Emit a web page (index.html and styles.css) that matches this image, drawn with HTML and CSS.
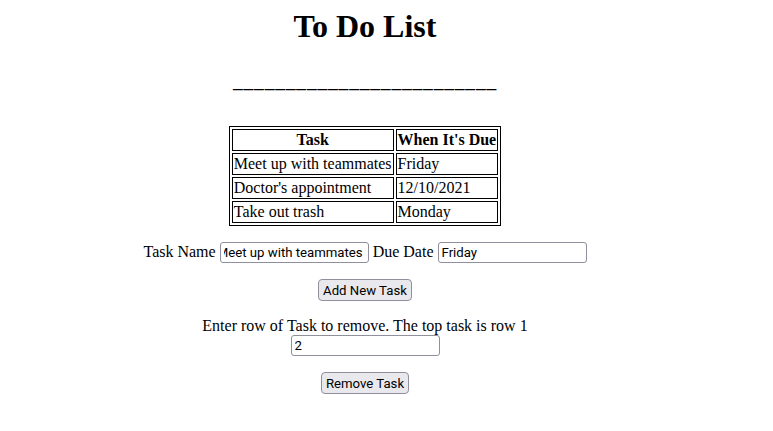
FILE: index.html
```html
<!DOCTYPE html>
<html>
<head>
<meta charset="utf-8">
<link rel="stylesheet" href="styles.css">
</head>
<body>
<div class="page">
<h1 class="title">To Do List</h1>
<h2 class="rule">_________________________</h2>
<table class="tasks">
<tr><th>Task</th><th>When It's Due</th></tr>
<tr><td>Meet up with teammates</td><td>Friday</td></tr>
<tr><td>Doctor's appointment</td><td>12/10/2021</td></tr>
<tr><td>Take out trash</td><td>Monday</td></tr>
</table>
<p class="row">Task Name <input class="field scrolled" type="text" value="Meet up with teammates"> Due Date <input class="field" type="text" value="Friday"></p>
<p class="row"><button class="btn" type="button">Add New Task</button></p>
<p class="row">Enter row of Task to remove. The top task is row 1<br><input class="field" type="text" value="2"></p>
<p class="row"><button class="btn" type="button">Remove Task</button></p>
</div>
</body>
</html>
```
FILE: styles.css
```css
html, body {
  margin: 0;
  padding: 0;
  background: #fff;
}
body {
  margin: 8px;
  font-family: "Liberation Serif", "Times New Roman", serif;
  font-size: 16px;
  color: #000;
}
.page {
  width: 714px;
  text-align: center;
}
.title {
  font-size: 32px;
  font-weight: bold;
  margin: 0 0 21px;
}
.rule {
  font-size: 19.5px;
  letter-spacing: 0.81px;
  font-weight: bold;
  padding-top: 5px;
  margin: 0 0 33px;
}
.tasks {
  margin: 0 auto;
  border: 1px solid #000;
  border-spacing: 2px;
}
.tasks th, .tasks td {
  border: 1px solid #000;
  padding: 1px;
}
.tasks td {
  text-align: left;
}
.row {
  margin: 16px 0;
}
.field {
  font-family: Roboto, "Liberation Sans", Arial, sans-serif;
  font-size: 13.2px;
  width: 149px;
  height: 21px;
  box-sizing: border-box;
  padding: 1px 3px;
  border: 1px solid #8f8f9d;
  border-radius: 3px;
  color: #000;
  background: #fff;
  vertical-align: baseline;
}
.scrolled {
  direction: rtl;
  padding-right: 5px;
}
.btn {
  font-family: Roboto, "Liberation Sans", Arial, sans-serif;
  font-size: 13.2px;
  padding: 1px 4px;
  height: 22px;
  border: 1px solid #8f8f9d;
  border-radius: 4px;
  background: #e9e9ed;
  color: #000;
}
```
